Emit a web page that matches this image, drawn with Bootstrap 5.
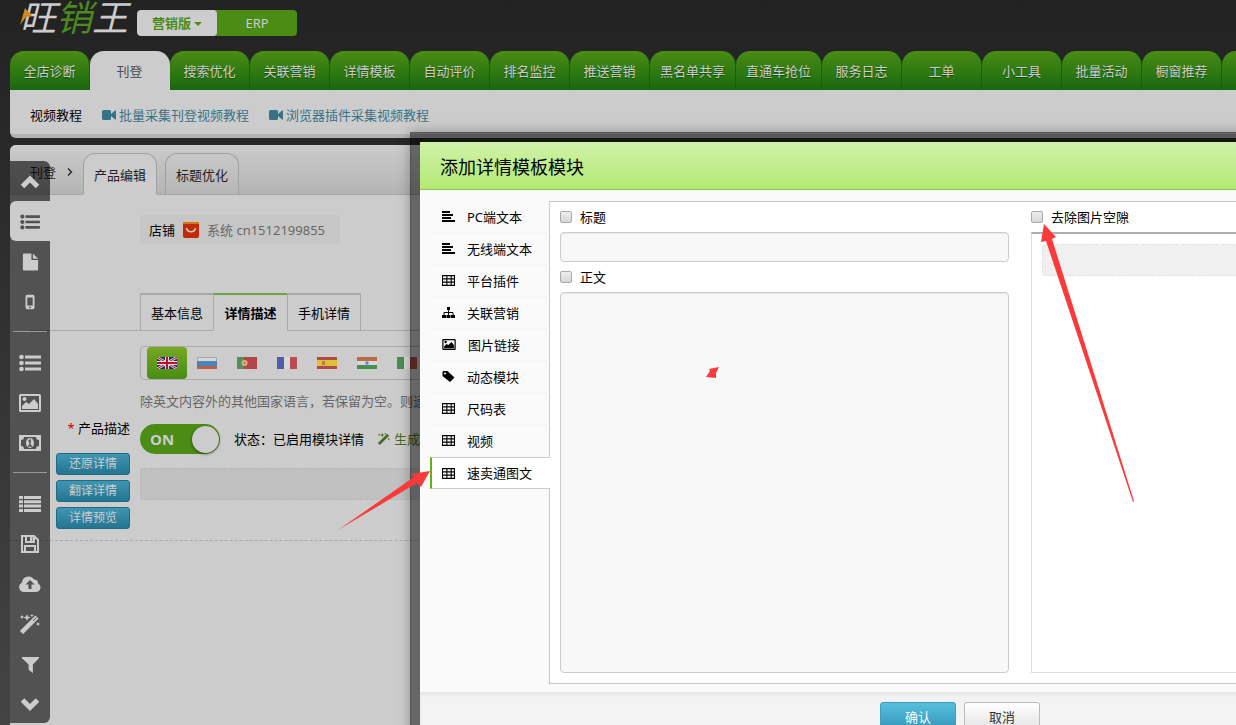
<!DOCTYPE html>
<html lang="zh-CN">
<head>
<meta charset="utf-8">
<meta name="viewport" content="width=device-width, initial-scale=1">
<title>旺销王</title>
<link rel="stylesheet" href="https://cdn.jsdelivr.net/npm/bootstrap@5.3.0/dist/css/bootstrap.min.css">
<style>
  body { font: 13px/20px "Noto Sans", "Noto Sans CJK SC", sans-serif; color: #000; background: linear-gradient(#222, #444) #444; height: 100vh; overflow: hidden; }
  a { text-decoration: none; color: inherit; }
  svg { display: block; flex: none; }
  .page-shell { position: relative; height: 100vh; overflow: hidden; padding-left: 10px; display: flex; flex-direction: column; }

  /* top bar */
  .topbar { height: 51px; padding-left: 10px; flex: none; }
  .logo { position: relative; width: 117px; font: italic 400 36px/31px "Noto Sans CJK SC", sans-serif; color: #ccc; height: 51px; }
  .logo b { font-weight: 400; color: #4b8a1e; }
  .logo svg { position: absolute; left: 0; top: 8px; }
  .edition { height: 26px; margin-top: 10px; border-radius: 4px; background: #4b8c14; overflow: hidden; }
  .edition button { width: 80px; border: 0; background: none; color: #ccc; padding: 0; border-radius: 4px; }
  .edition button.on { background: #ccc; color: #4b8c14; font-weight: 700; }
  .edition .dropdown-toggle::after { margin-left: 3px; vertical-align: 2px; border-width: 4px 4px 0; }

  /* main tabs */
  .main-tabs { flex: none; flex-wrap: nowrap; }
  .main-tabs a { display: block; flex: none; min-width: 80px; height: 39px; line-height: 40px; padding: 0 10px; text-align: center; white-space: nowrap; color: #ccc; text-shadow: 0 1px 1px #0006; border-radius: 14px 14px 0 0; border-right: 1px solid #1c5c0d; background: linear-gradient(#4b8c14, #17690f); }
  .main-tabs a.on { background: #ccc; color: #444c54; text-shadow: none; border-color: #ccc; }
  .sub-links { height: 48px; flex: none; padding: 5px 20px 0; gap: 20px; background: #ccc; border-bottom: 4px solid #b3b3b3; border-radius: 0 0 0 6px; }
  .sub-links a { color: #387286; display: flex; align-items: center; gap: 3px; }

  /* editor panel */
  .editor { flex: 1 0 auto; margin-top: 7px; background: #ccc; border-radius: 6px 0 0 0; }
  .crumbs { height: 50px; padding: 8px 0 0 20px; background: linear-gradient(#cbcbcb, #b4b4b4); border-bottom: 1px solid #a4a4a4; border-radius: 6px 0 0 0; gap: 8px; color: #222; }
  .crumbs .where { width: 45px; padding-top: 9px; padding-right: 2px; }
  .crumbs .tab-link { width: 74px; height: 42px; line-height: 43px; text-align: center; border: 1px solid #a0a0a0; border-bottom: 1px solid #a4a4a4; border-radius: 12px 12px 0 0; background: linear-gradient(#c8c8c8, #b6b6b6); }
  .crumbs .tab-link.on { background: #ccc; border-bottom-color: #ccc; }
  .store { width: 200px; height: 29px; margin: 20px 0 0 130px; padding: 0 9px; background: #c6c6c6; border-radius: 4px; gap: 8px; }
  .store span { color: #666; }
  .detail-tabs { margin: 49px 0 0 20px; padding-left: 110px; border-bottom: 1px solid #a9a9a9; height: 38px; }
  .detail-tabs a { width: 74px; height: 38px; line-height: 36px; text-align: center; border: 1px solid #a9a9a9; border-top: 2px solid #a9a9a9; margin-right: -1px; }
  .detail-tabs a:nth-child(2) { width: 75px; }
  .detail-tabs a.on { font-weight: 700; border-top-color: #72a044; border-bottom-color: #ccc; }
  .desc-row { padding-bottom: 11px; border-bottom: 1px dashed #a9a9a9; gap: 10px; }
  .desc-side { width: 120px; flex: none; padding-top: 87px; gap: 5px; }
  .desc-side label { margin-bottom: 10px; }
  .desc-side button { width: 74px; height: 22px; padding: 0; border: 1px solid #1d6c85; border-radius: 3px; background: linear-gradient(#4096b2, #237590); color: #ccc; font-size: 12px; line-height: 20px; }
  .flags { height: 34px; margin-top: 15px; padding: 0 6px; border: 1px solid #a9a9a9; border-radius: 4px; }
  .flags button { width: 40px; height: 32px; padding: 0 10px; border: 0; background: none; border-radius: 4px; }
  .flags button.on { background: linear-gradient(#76a823, #4b8c14); }
  .flags svg { opacity: .75; }
  .flags .on svg { opacity: 1; }
  .hint { margin: 11px 0 13px; color: #666; white-space: nowrap; }
  .toggle { position: relative; width: 80px; height: 30px; padding: 2px 1px 2px 10px; border-radius: 15px; background: #4b8c14; color: #ccc; font: 700 15px/26px "Open Sans", sans-serif; }
  .toggle i { width: 27px; height: 27px; border-radius: 50%; background: #ccc; box-shadow: 0 1px 3px #0008; }
  .state { margin-left: 14px; }
  .slot { height: 32px; border: 1px dashed #b6b6b6; border-radius: 4px; background: #c1c1c1; margin-top: 14px; }
  .desc-row .slot { margin-bottom: 29px; }

  /* floating tool rail */
  .rail { position: absolute; left: 10px; top: 161px; width: 40px; background: rgba(0,0,0,.6); border-radius: 0 6px 6px 0; color: #ccc; }
  .rail button { display: flex; align-items: center; justify-content: center; width: 40px; height: 40px; border: 0; padding: 2px 0 0; background: none; color: inherit; }
  .rail button.on { background: #ccc; color: #515151; border-radius: 6px 0 0 6px; }
  .rail hr { margin: 10px 3px; border: 0; height: 1px; background: #999; opacity: 1; }

  /* module dialog */
  .dialog-frame { position: absolute; left: 410px; top: 132px; width: 1100px; border: 10px solid rgba(0,0,0,.5); box-shadow: 0 0 12px rgba(0,0,0,.3); background-clip: padding-box; background-color: #fafafa; }
  .dialog-frame header { height: 48px; padding: 0 20px; background: linear-gradient(#d0f2a9, #b3e974); border-bottom: 1px solid #8cc153; }
  .dialog-frame h1 { font-size: 18px; line-height: 50px; margin: 0; font-weight: 400; }
  .dialog-main { padding: 11px 10px 8px; }
  .modules { width: 120px; flex: none; margin-right: -1px; z-index: 1; }
  .modules a { display: flex; align-items: center; height: 32px; padding-left: 12px; border-bottom: 1px solid #f3f9ee; border-right: 1px solid #ccc; }
  .modules a svg { margin-right: 12px; }
  .modules a.on { background: #fff; border: solid #ccc; border-width: 1px 0; border-left: 2px solid #63b01d; padding-left: 10px; }
  .pane { border: 1px solid #c6c6c6; background: #fff; padding: 4px 9px 10px 10px; gap: 22px; min-height: 483px; }
  .pane > div { flex: 1 1 0; }
  .tick { height: 22px; gap: 8px; }
  .tick input { appearance: none; width: 12px; height: 12px; margin: 0; border: 1px solid #aaa; border-radius: 2px; background: linear-gradient(#eee, #d6d6d6); }
  .field { border: 1px solid #ccc; border-radius: 4px; background: #f8f8f8; width: 100%; box-shadow: inset 0 1px 1px #0001; padding: 4px 8px; display: block; resize: none; }
  .field-line { height: 30px; }
  .preview { margin-top: 4px; padding: 10px; border: 1px solid #ddd; border-top: 2px solid #b0b0b0; }
  .preview .slot { margin: 0; background: #f0f0f0; border-color: #e2e2e2; }
  .dialog-frame footer { height: 58px; padding-top: 10px; background: #f3f3f3; box-shadow: inset 0 3px 3px #e6e6e6; gap: 8px; }
  .dialog-frame footer button { width: 76px; height: 30px; padding: 0; border-radius: 3px; font-size: 13px; line-height: 28px; }
  .ok-btn { background: linear-gradient(#59bfde, #2f93b5); border: 1px solid #3a9dbb; color: #fff; }
  .no-btn { background: linear-gradient(#fff, #e2e2e2); border: 1px solid #bbb; color: #333; }
  .marks { position: absolute; left: 0; top: 0; width: 100%; height: 100%; pointer-events: none; fill: #fb3b3b; }
</style>
</head>
<body>
<svg width="0" height="0" class="position-absolute" aria-hidden="true">
  <symbol id="i-up" viewBox="0 0 20 20"><path d="M2.500 14.500L10 7l7.500 7.500" fill="none" stroke="currentColor" stroke-width="5"/></symbol>
  <symbol id="i-down" viewBox="0 0 20 20"><path d="M2.500 6L10 13.500 17.500 6" fill="none" stroke="currentColor" stroke-width="5"/></symbol>
  <symbol id="i-list" viewBox="0 0 22 20"><g fill="currentColor"><circle cx="2.500" cy="4" r="2.300"/><circle cx="2.500" cy="10" r="2.300"/><circle cx="2.500" cy="16" r="2.300"/><path d="M6 2.500h16v3H6zM6 8.500h16v3H6zM6 14.500h16v3H6z"/></g></symbol>
  <symbol id="i-rows" viewBox="0 0 22 20"><path fill="currentColor" d="M0 2h4v3H0zM5 2h17v3H5zM0 6.300h4v3H0zM5 6.300h17v3H5zM0 10.600h4v3H0zM5 10.600h17v3H5zM0 15h4v3H0zM5 15h17v3H5z"/></symbol>
  <symbol id="i-file" viewBox="0 0 20 20"><path fill="currentColor" d="M3 1h8v7h7v10a1 1 0 0 1-1 1H3a1 1 0 0 1-1-1V2a1 1 0 0 1 1-1zM12.500 1L18 6.500h-5.500z"/></symbol>
  <symbol id="i-phone" viewBox="0 0 20 20"><path fill="currentColor" fill-rule="evenodd" d="M7 2h6a2 2 0 0 1 2 2v12a2 2 0 0 1-2 2H7a2 2 0 0 1-2-2V4a2 2 0 0 1 2-2zM7 5v9h6V5zM10 15a1 1 0 1 0 0 2 1 1 0 0 0 0-2z"/></symbol>
  <symbol id="i-image" viewBox="0 0 22 18"><path fill="currentColor" fill-rule="evenodd" d="M1.500 0h19A1.500 1.500 0 0 1 22 1.500v15a1.500 1.500 0 0 1-1.500 1.500h-19A1.500 1.500 0 0 1 0 16.500v-15A1.500 1.500 0 0 1 1.500 0zM2 2v14h18V2zM3 15v-3l4-4 3 2 5-5 4 5v5z"/><circle cx="5.500" cy="5" r="2" fill="currentColor"/></symbol>
  <symbol id="i-cash" viewBox="0 0 22 16"><path fill="currentColor" fill-rule="evenodd" d="M0 0h22v16H0zM5 2a3 3 0 0 1-3 3v6a3 3 0 0 1 3 3h12a3 3 0 0 1 3-3V5a3 3 0 0 1-3-3z"/><ellipse cx="11" cy="8" rx="4" ry="5" fill="currentColor"/><path d="M9.500 6.500L11 5.200V11M9 11h4" fill="none" stroke="#515151" stroke-width="1.500"/></symbol>
  <symbol id="i-save" viewBox="0 0 18 18"><path fill="none" stroke="currentColor" stroke-width="2" d="M1 1h12l4 4v12H1zM4 17v-6h10v6M5 1v6h8V1"/><path fill="currentColor" d="M9 2h2.500v4H9z"/></symbol>
  <symbol id="i-cloud" viewBox="0 0 22 18"><path fill="currentColor" fill-rule="evenodd" d="M5 17a5 5 0 0 1-2-9.500A6.500 6.500 0 0 1 15 4.500a3.500 3.500 0 0 1 4 4A4.500 4.500 0 0 1 17.500 17zM11 5L6.500 9.500h3V14h3V9.500h3z"/></symbol>
  <symbol id="i-wand" viewBox="0 0 20 20"><path d="M1.500 18.500L17 3" stroke="currentColor" stroke-width="4.500"/><path d="M13 7l3.500-3.500" stroke="#515151" stroke-width="1"/><path fill="currentColor" d="M2 1l.7 1.300L4 3l-1.300.7L2 5l-.7-1.300L0 3l1.300-.7zM7 0l1 2.500L10.500 3.500 8 4.500 7 7 6 4.500 3.500 3.500 6 2.500zM12 0l.6 1 1.400.5-1.400.6L12 3.500l-.6-1.400-1.400-.6 1.400-.5zM18 8l.6 1.300L20 10l-1.400.7L18 12l-.6-1.300L16 10l1.400-.7z"/></symbol>
  <symbol id="i-filter" viewBox="0 0 18 18"><path fill="currentColor" d="M0 1h18v1.500L11.500 9v9L7 14.500V9L0 2.500z"/></symbol>
  <symbol id="i-cam" viewBox="0 0 14 10"><path fill="currentColor" d="M1.500 0h6A1.500 1.500 0 0 1 9 1.500V4l4-3.500h1v9h-1L9 6v2.500A1.500 1.500 0 0 1 7.500 10h-6A1.500 1.500 0 0 1 0 8.500v-7A1.500 1.500 0 0 1 1.500 0z"/></symbol>
  <symbol id="i-text" viewBox="0 0 13 11"><path fill="currentColor" d="M0 0h8v2H0zM0 3h11v2H0zM0 6h9v2H0zM0 9h13v2H0z"/></symbol>
  <symbol id="i-table" viewBox="0 0 12 10"><path fill="none" stroke="currentColor" d="M.5.500h11v9H.5zM0 3.500h12M0 6.500h12M4.500 0v10M8.500 0v10"/></symbol>
  <symbol id="i-tree" viewBox="0 0 13 11"><path fill="currentColor" d="M5 0h3v3H5zM0 8h4v3H0zM4.500 8h4v3h-4zM9 8h4v3H9z"/><path fill="none" stroke="currentColor" d="M6.500 2v6M2 8V5.500h9V8"/></symbol>
  <symbol id="i-tag" viewBox="0 0 12 11"><path fill="currentColor" fill-rule="evenodd" d="M0 1a1 1 0 0 1 1-1h4l7 6.500L7.500 11 0 5zM2.500 1.500a1 1 0 1 0 0 2 1 1 0 0 0 0-2z"/></symbol>
</svg>

<div class="page-shell">
  <div class="topbar d-flex align-items-start">
    <a class="logo" href="#">旺<b>销</b>王<svg width="12" height="17" viewBox="0 0 12 17"><path fill="#d08a1c" d="M5 0l7 8-6 1-6 8z"/></svg></a>
    <div class="edition d-flex">
      <button class="on dropdown-toggle" type="button">营销版</button>
      <button type="button">ERP</button>
    </div>
  </div>

  <nav class="main-tabs d-flex">
    <a href="#">全店诊断</a><a href="#" class="on">刊登</a><a href="#">搜索优化</a><a href="#">关联营销</a><a href="#">详情模板</a><a href="#">自动评价</a><a href="#">排名监控</a><a href="#">推送营销</a><a href="#">黑名单共享</a><a href="#">直通车抢位</a><a href="#">服务日志</a><a href="#">工单</a><a href="#">小工具</a><a href="#">批量活动</a><a href="#">橱窗推荐</a><a href="#"></a>
  </nav>
  <div class="sub-links d-flex align-items-center">
    <span>视频教程</span>
    <a href="#"><svg width="14" height="10"><use href="#i-cam"/></svg>批量采集刊登视频教程</a>
    <a href="#"><svg width="14" height="10"><use href="#i-cam"/></svg>浏览器插件采集视频教程</a>
  </div>

  <main class="editor">
    <div class="crumbs d-flex align-items-start">
      <div class="where d-flex align-items-center justify-content-between"><a href="#">刊登</a><svg width="6" height="8" viewBox="0 0 6 8"><path d="M1 .5L4.500 4 1 7.500" fill="none" stroke="#222" stroke-width="1.300"/></svg></div>
      <a class="tab-link on" href="#">产品编辑</a>
      <a class="tab-link" href="#">标题优化</a>
    </div>
    <div class="store d-flex align-items-center">店铺
      <svg width="16" height="16" viewBox="0 0 16 16"><rect width="16" height="16" rx="2" fill="#c22a04"/><path d="M0 2a2 2 0 0 1 2-2h12a2 2 0 0 1 2 2z" fill="#d27b00"/><path d="M3.500 6c1 5 8 5 9 0" fill="none" stroke="#ccc" stroke-width="1.500"/></svg>
      <span>系统 cn1512199855</span></div>
    <nav class="detail-tabs d-flex"><a href="#">基本信息</a><a href="#" class="on">详情描述</a><a href="#">手机详情</a></nav>
    <div class="desc-row d-flex">
      <div class="desc-side d-flex flex-column align-items-end">
        <label for="descToggle"><span style="color:#c00">*</span> 产品描述</label>
        <button type="button">还原详情</button>
        <button type="button">翻译详情</button>
        <button type="button">详情预览</button>
      </div>
      <div class="flex-grow-1">
        <div class="flags d-flex">
          <button class="on" type="button" aria-label="English"><svg width="20" height="12" viewBox="0 0 20 12"><path fill="#1c2a78" d="M0 0h20v12H0z"/><path stroke="#ddd" stroke-width="2.500" d="M0 0l20 12M20 0L0 12"/><path stroke="#b8102a" d="M0 0l20 12M20 0L0 12"/><path stroke="#ddd" stroke-width="4" d="M10 0v12M0 6h20"/><path stroke="#b8102a" stroke-width="2" d="M10 0v12M0 6h20"/></svg></button>
          <button type="button" aria-label="Русский"><svg width="20" height="12" viewBox="0 0 20 12"><path fill="#ddd" stroke="#999" d="M.5.500h19v11H.5z"/><path fill="#1a6fb8" d="M0 4h20v5H0z"/><path fill="#b83a20" d="M0 9h20v3H0z"/></svg></button>
          <button type="button" aria-label="Português"><svg width="20" height="12" viewBox="0 0 20 12"><path fill="#a81a22" d="M0 0h20v12H0z"/><path fill="#2a7a3a" d="M0 0h7v12H0z"/><circle cx="7.500" cy="6" r="3" fill="#d8b060"/><circle cx="7.500" cy="6" r="1.200" fill="#c44"/></svg></button>
          <button type="button" aria-label="Français"><svg width="20" height="12" viewBox="0 0 20 12"><path fill="#2838a0" d="M0 0h7v12H0z"/><path fill="#ddd" d="M7 0h6v12H7z"/><path fill="#b02030" d="M13 0h7v12h-7z"/></svg></button>
          <button type="button" aria-label="Español"><svg width="20" height="12" viewBox="0 0 20 12"><path fill="#b01c1c" d="M0 0h20v12H0z"/><path fill="#e0c000" d="M0 3h20v6H0z"/><path fill="#b86028" d="M5 4h3v4H5z"/></svg></button>
          <button type="button" aria-label="हिन्दी"><svg width="20" height="12" viewBox="0 0 20 12"><path fill="#b84a20" d="M0 0h20v4H0z"/><path fill="#ddd" d="M0 4h20v4H0z"/><path fill="#1c7a2c" d="M0 8h20v4H0z"/><circle cx="10" cy="6" r="1.700" fill="#4468c8"/></svg></button>
          <button type="button" aria-label="Italiano"><svg width="20" height="12" viewBox="0 0 20 12"><path fill="#1c7a2c" d="M0 0h7v12H0z"/><path fill="#ddd" d="M7 0h6v12H7z"/><path fill="#a01c20" d="M13 0h7v12h-7z"/></svg></button>
        </div>
        <p class="hint">除英文内容外的其他国家语言，若保留为空。则速</p>
        <div class="d-flex align-items-center">
          <label class="toggle d-flex align-items-center justify-content-between"><input id="descToggle" class="visually-hidden" type="checkbox" checked>ON<i></i></label>
          <span class="state">状态：已启用模块详情</span>
          <a href="#" class="state d-flex align-items-center gap-1" style="color:#3f6d24"><svg width="12" height="12"><use href="#i-wand"/></svg>生成</a>
        </div>
        <div class="slot"></div>
      </div>
    </div>
  </main>

  <aside class="rail">
    <button type="button" aria-label="up"><svg width="20" height="20"><use href="#i-up"/></svg></button>
    <button type="button" class="on" aria-label="list"><svg width="20" height="18"><use href="#i-list"/></svg></button>
    <button type="button" aria-label="file"><svg width="19" height="20"><use href="#i-file"/></svg></button>
    <button type="button" aria-label="mobile"><svg width="18" height="18"><use href="#i-phone"/></svg></button>
    <hr>
    <button type="button" aria-label="details"><svg width="22" height="20"><use href="#i-list"/></svg></button>
    <button type="button" aria-label="image"><svg width="22" height="18"><use href="#i-image"/></svg></button>
    <button type="button" aria-label="price"><svg width="22" height="16"><use href="#i-cash"/></svg></button>
    <hr>
    <button type="button" aria-label="rows"><svg width="22" height="20"><use href="#i-rows"/></svg></button>
    <button type="button" aria-label="save"><svg width="18" height="18"><use href="#i-save"/></svg></button>
    <button type="button" aria-label="upload"><svg width="22" height="18"><use href="#i-cloud"/></svg></button>
    <button type="button" aria-label="magic"><svg width="20" height="20"><use href="#i-wand"/></svg></button>
    <button type="button" aria-label="filter"><svg width="17" height="17"><use href="#i-filter"/></svg></button>
    <button type="button" aria-label="down"><svg width="20" height="20"><use href="#i-down"/></svg></button>
  </aside>

  <section class="dialog-frame" role="dialog" aria-labelledby="dlgTitle">
    <header><h1 id="dlgTitle">添加详情模板模块</h1></header>
    <div class="dialog-main d-flex">
      <nav class="modules">
        <a href="#"><svg width="13" height="11"><use href="#i-text"/></svg>PC端文本</a>
        <a href="#"><svg width="13" height="11"><use href="#i-text"/></svg>无线端文本</a>
        <a href="#"><svg width="13" height="11"><use href="#i-table"/></svg>平台插件</a>
        <a href="#"><svg width="13" height="11"><use href="#i-tree"/></svg>关联营销</a>
        <a href="#"><svg width="14" height="11"><use href="#i-image"/></svg>图片链接</a>
        <a href="#"><svg width="13" height="11"><use href="#i-tag"/></svg>动态模块</a>
        <a href="#"><svg width="13" height="11"><use href="#i-table"/></svg>尺码表</a>
        <a href="#"><svg width="13" height="11"><use href="#i-table"/></svg>视频</a>
        <a href="#" class="on"><svg width="13" height="11"><use href="#i-table"/></svg>速卖通图文</a>
      </nav>
      <div class="pane d-flex flex-grow-1">
        <div class="d-flex flex-column">
          <div class="tick d-flex align-items-center"><input type="checkbox" id="ckTitle"><label for="ckTitle">标题</label></div>
          <input class="field field-line mt-1" type="text" aria-label="标题">
          <div class="tick d-flex align-items-center mt-1"><input type="checkbox" id="ckBody"><label for="ckBody">正文</label></div>
          <textarea class="field mt-1 flex-grow-1" aria-label="正文"></textarea>
        </div>
        <div class="d-flex flex-column">
          <div class="tick d-flex align-items-center"><input type="checkbox" id="ckGap"><label for="ckGap">去除图片空隙</label></div>
          <div class="preview flex-grow-1"><div class="slot"></div></div>
        </div>
      </div>
    </div>
    <footer class="d-flex justify-content-center">
      <button class="ok-btn" type="button">确认</button>
      <button class="no-btn" type="button">取消</button>
    </footer>
  </section>

  <svg class="marks" aria-hidden="true">
    <path d="M430 471L411 474L414 477L338 530L417 483L421 487Z"/>
    <path d="M1044 224L1041 242L1046 241L1133 502L1134 501L1052 239L1056 237Z"/>
    <path d="M719 367L709 369L710 371L706 377L716 378L716 373Z"/>
  </svg>
</div>
<script src="https://cdn.jsdelivr.net/npm/bootstrap@5.3.0/dist/js/bootstrap.bundle.min.js"></script>
</body>
</html>
